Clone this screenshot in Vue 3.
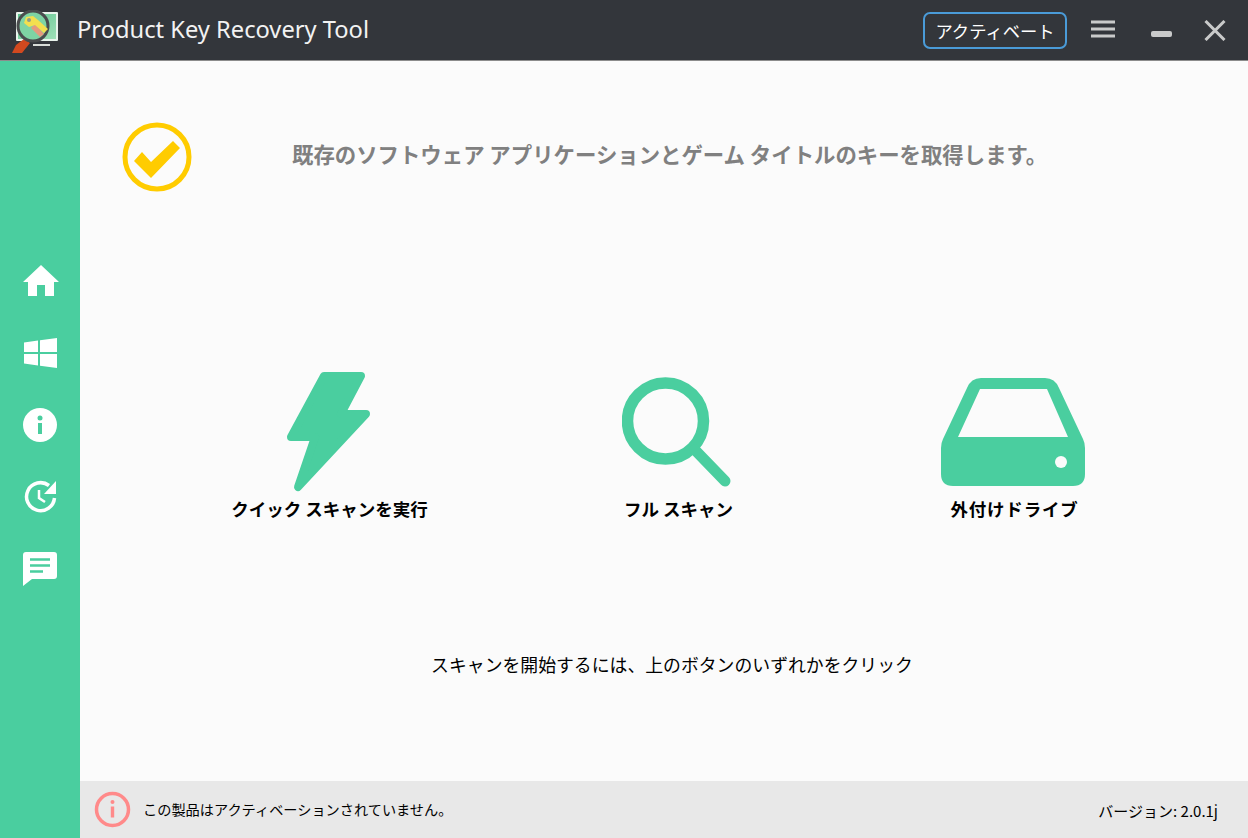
<script setup>
const navItems = ['home', 'windows', 'info', 'history', 'chat']
</script>

<template>
  <div class="window">
    <header class="titlebar">
      <svg class="logo" width="50" height="44" viewBox="0 0 50 44">
        <defs>
          <linearGradient id="screen" x1="0" y1="0" x2="1" y2="1">
            <stop offset="0" stop-color="#5fc48f" />
            <stop offset="1" stop-color="#9fe0b8" />
          </linearGradient>
        </defs>
        <rect x="5" y="2" width="42" height="29" rx="1" fill="#e9f3ec" />
        <rect x="7" y="4" width="38" height="25" fill="url(#screen)" />
        <rect x="22" y="34" width="17" height="2" fill="#d8dcd8" />
        <path d="M1 43 L5 35 L13 29 L19 33 L11 43 Z" fill="#d2491f" />
        <circle cx="22" cy="16" r="15" fill="#7ed4a4" stroke="#4a4c4e" stroke-width="3" />
        <path d="M20 18 L29 27 L33 24 L24 14 Z" fill="#e59a7e" />
        <path d="M22 6 L15 7 L13 13 L18 17 L24 15 L33 23 L37 19 L27 10 Z" fill="#f3df4f" />
        <circle cx="18" cy="10" r="2" fill="#8d9c88" />
      </svg>
      <span class="app-name">Product Key Recovery Tool</span>
      <button class="activate">アクティベート</button>
      <svg class="menu-icon" width="24" height="18" viewBox="0 0 24 18">
        <path d="M0 2 H24 M0 9 H24 M0 16 H24" stroke="#c9caca" stroke-width="3" />
      </svg>
      <svg class="min-icon" width="21" height="6" viewBox="0 0 21 6">
        <rect width="21" height="6" rx="2" fill="#c9caca" />
      </svg>
      <svg class="close-icon" width="22" height="21" viewBox="0 0 22 21">
        <path d="M1.5 1 L20.5 20 M20.5 1 L1.5 20" stroke="#c9caca" stroke-width="3" />
      </svg>
    </header>

    <div class="body">
      <nav class="sidebar">
        <div v-for="item in navItems" :key="item" class="nav-item">
          <svg v-if="item === 'home'" class="nudge" width="36" height="32" viewBox="0 0 36 32">
            <path d="M18 0 L36 17 H31 V31 H22 V20 H14 V31 H5 V17 H0 Z" fill="#fff" />
          </svg>
          <svg v-else-if="item === 'windows'" class="nudge" width="34" height="30" viewBox="0 0 34 30">
            <path d="M0 4.500 L14 2.500 V14 H0 Z M16 2.200 L33 0 V14 H16 Z M0 16 H14 V27.500 L0 25.500 Z M16 16 H33 V30 L16 27.800 Z" fill="#fff" />
          </svg>
          <svg v-else-if="item === 'info'" width="34" height="34" viewBox="0 0 34 34">
            <circle cx="17" cy="17" r="17" fill="#fff" />
            <circle cx="17" cy="10" r="2.500" fill="#4ace9f" />
            <rect x="15" y="15" width="4" height="11" fill="#4ace9f" />
          </svg>
          <svg v-else-if="item === 'history'" class="nudge" width="34" height="34" viewBox="0 0 34 34">
            <path d="M25 5.500 A14 14 0 1 0 30.500 18" fill="none" stroke="#fff" stroke-width="3.500" />
            <path d="M32 1 V14 H20 Z" fill="#fff" />
            <path d="M15 10 V18 L21 22" fill="none" stroke="#fff" stroke-width="2.500" />
          </svg>
          <svg v-else width="34" height="34" viewBox="0 0 34 34">
            <path d="M3 0 H31 Q34 0 34 3 V24 Q34 27 31 27 H9 L0 34 V3 Q0 0 3 0 Z" fill="#fff" />
            <path d="M7 7.500 H27 M7 13.500 H27 M7 19.500 H20" stroke="#4ace9f" stroke-width="2.500" />
          </svg>
        </div>
      </nav>

      <main class="main">
        <div class="content">
          <section class="headline">
            <svg width="70" height="70" viewBox="0 0 70 70">
              <circle cx="35" cy="35" r="32" fill="none" stroke="#ffcc00" stroke-width="5" />
              <polygon points="12,39 20,30 29,40 51,19 58,26 29,56" fill="#ffcc00" />
            </svg>
            <h1>既存のソフトウェア アプリケーションとゲーム タイトルのキーを取得します。</h1>
          </section>

          <section class="tiles">
            <div class="tile">
              <svg width="90" height="124" viewBox="0 0 90 124">
                <path d="M39 6 H76 L56 44 H81 L13 117 L30 67 H6 Z" fill="#4ace9f" stroke="#4ace9f" stroke-width="8" stroke-linejoin="round" />
              </svg>
              <span>クイック スキャンを実行</span>
            </div>
            <div class="tile">
              <svg class="lens" width="110" height="124" viewBox="0 0 110 124">
                <circle cx="43.500" cy="51" r="38" fill="none" stroke="#4ace9f" stroke-width="11.500" />
                <path d="M73 80 L103 111" stroke="#4ace9f" stroke-width="11" stroke-linecap="round" />
              </svg>
              <span>フル スキャン</span>
            </div>
            <div class="tile">
              <svg class="drive" width="144" height="124" viewBox="0 0 144 124">
                <path fill-rule="evenodd" fill="#4ace9f" d="M0 78 Q0 73 2 69 L26 18 Q30 8 40 8 H104 Q114 8 118 18 L142 69 Q144 73 144 78 V104 Q144 116 132 116 H12 Q0 116 0 104 Z M39 19 L17 67 H127 L106 19 Z" />
                <circle cx="120" cy="92" r="6" fill="#fbfbfb" />
              </svg>
              <span class="drive-label">外付けドライブ</span>
            </div>
          </section>

          <p class="hint">スキャンを開始するには、上のボタンのいずれかをクリック</p>
        </div>

        <footer class="status">
          <svg width="37" height="37" viewBox="0 0 37 37">
            <circle cx="18.500" cy="18.500" r="16" fill="none" stroke="#ff8a8a" stroke-width="3.500" />
            <circle cx="18.500" cy="11" r="2" fill="#ff8a8a" />
            <rect x="16.800" y="15.500" width="3.400" height="11" fill="#ff8a8a" />
          </svg>
          <span class="status-text">この製品はアクティベーションされていません。</span>
          <span class="version">バージョン: 2.0.1j</span>
        </footer>
      </main>
    </div>
  </div>
</template>

<style>
html, body {
  margin: 0;
  background: #fbfbfb;
}
</style>

<style scoped>
.window {
  width: 1248px;
  height: 838px;
  display: flex;
  flex-direction: column;
  overflow: hidden;
  font-family: "Noto Sans CJK JP", "Noto Sans", sans-serif;
  color: #000;
}

.titlebar {
  height: 60px;
  flex: none;
  display: flex;
  align-items: center;
  background: #33363b;
  border-bottom: 1px solid #8c8c8c;
  padding-left: 11px;
}

.logo {
  margin-top: 4px;
}

.app-name {
  margin-left: 16px;
  margin-bottom: 2px;
  font-family: "Noto Sans", sans-serif;
  font-size: 23.700px;
  color: #f2f2f2;
}

.activate {
  margin-left: auto;
  width: 144px;
  height: 37px;
  padding: 0;
  background: transparent;
  border: 2px solid #4a9bd8;
  border-radius: 7px;
  color: #fff;
  font-family: inherit;
  font-size: 17.300px;
}

.menu-icon {
  margin-left: 24px;
  margin-bottom: 2px;
}

.min-icon {
  margin-left: 36px;
  margin-top: 8px;
}

.close-icon {
  margin-left: 32px;
  margin-right: 22px;
}

.body {
  flex: 1;
  display: flex;
  min-height: 0;
}

.sidebar {
  width: 80px;
  flex: none;
  background: #4ace9f;
  padding-top: 184px;
  box-sizing: border-box;
}

.nav-item {
  height: 72px;
  display: flex;
  align-items: center;
  justify-content: center;
}

.nudge {
  margin-left: 2px;
}

.main {
  flex: 1;
  display: flex;
  flex-direction: column;
  background: #fbfbfb;
}

.content {
  flex: 1;
}

.headline {
  display: flex;
  align-items: center;
  padding: 61px 0 0 42px;
  height: 70px;
}

.headline h1 {
  margin: 0 0 8px 100px;
  font-size: 21.400px;
  font-weight: 700;
  color: #808080;
  white-space: nowrap;
}

.tiles {
  display: grid;
  grid-template-columns: 349px 349px 323px;
  padding-left: 75px;
  margin-top: 178px;
}

.tile {
  display: flex;
  flex-direction: column;
  align-items: center;
  font-size: 17.500px;
  font-weight: 700;
  line-height: 26px;
}

.tile svg {
  display: block;
}

.tile span {
  margin-top: 2px;
}

.tile .lens {
  margin-right: 3px;
}

.tile .drive {
  margin-right: 4px;
}

.tile .drive-label {
  letter-spacing: 0.800px;
}

.hint {
  margin: 129px 0 0;
  padding-left: 16px;
  text-align: center;
  font-size: 17.850px;
  line-height: 26px;
}

.status {
  height: 57px;
  flex: none;
  display: flex;
  align-items: center;
  background: #e8e8e8;
  padding: 0 30px 0 14px;
  font-size: 14.200px;
}

.status-text {
  margin-left: 12px;
  margin-bottom: 2px;
}

.version {
  margin-left: auto;
  margin-top: 2px;
  font-size: 15px;
}
</style>
